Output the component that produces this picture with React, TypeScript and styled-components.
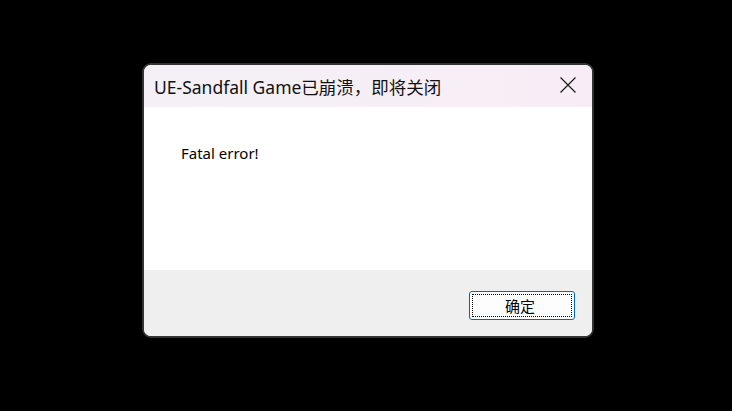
import React from "react";
import styled, { createGlobalStyle } from "styled-components";

const Global = createGlobalStyle`
	html, body {
		margin: 0;
		padding: 0;
		background: #000;
	}
`;

const CloseIcon = () => (
	<svg width="16" height="16" viewBox="0 0 16 16">
		<path d="M0.5 0.5 L15.5 15.5 M15.5 0.5 L0.5 15.5" stroke="#1a1a1a" strokeWidth="1.2" fill="none" />
	</svg>
);

const App = () => {
	return (
		<Page>
			<Global />
			<DialogWindow>
				<TitleBar>
					<Title>UE-Sandfall Game已崩溃，即将关闭</Title>
					<CloseButton aria-label="关闭">
						<CloseIcon />
					</CloseButton>
				</TitleBar>
				<Body>
					<Message>Fatal error!</Message>
				</Body>
				<Footer>
					<OkButton>
						<FocusRing>确定</FocusRing>
					</OkButton>
				</Footer>
			</DialogWindow>
		</Page>
	);
};

const Page = styled.div`
	width: 732px;
	height: 411px;
	box-sizing: border-box;
	padding: 63px 0 0 142px;
	background: #000;
	display: flex;
	align-items: flex-start;
`;

const DialogWindow = styled.div`
	width: 452px;
	height: 275px;
	box-sizing: border-box;
	border: 2px solid #333;
	border-radius: 9px;
	overflow: hidden;
	display: flex;
	flex-direction: column;
	background: #fff;
`;

const TitleBar = styled.div`
	height: 42px;
	flex: none;
	background: linear-gradient(90deg, #f4f0f6, #f8edf6);
	display: flex;
	align-items: center;
	justify-content: space-between;
	padding: 0 16px 0 10px;
`;

const Title = styled.span`
	font-family: "Noto Sans", "Noto Sans CJK SC", sans-serif;
	font-size: 17.5px;
	color: #111;
`;

const CloseButton = styled.div`
	width: 16px;
	height: 16px;
	display: flex;
	margin-top: -3px;
`;

const Body = styled.div`
	flex: 1;
	background: #fff;
	padding: 36px 0 0 37px;
`;

const Message = styled.div`
	font-family: "Noto Sans", "Liberation Sans", sans-serif;
	font-size: 15px;
	color: #000;
`;

const Footer = styled.div`
	height: 66px;
	flex: none;
	background: #efefef;
	display: flex;
	align-items: flex-start;
	justify-content: flex-end;
	padding: 21px 17px 0 0;
	box-sizing: border-box;
`;

const OkButton = styled.div`
	width: 106px;
	height: 29px;
	box-sizing: border-box;
	border: 1px solid #0067c0;
	border-radius: 3px;
	background: #fdfdfd;
	padding: 2px;
	display: flex;
`;

const FocusRing = styled.div`
	flex: 1;
	border: 1px dotted #000;
	display: flex;
	align-items: center;
	justify-content: center;
	padding-right: 4px;
	font-family: "Noto Sans CJK SC", sans-serif;
	font-size: 15px;
	color: #000;
`;

export default App;
